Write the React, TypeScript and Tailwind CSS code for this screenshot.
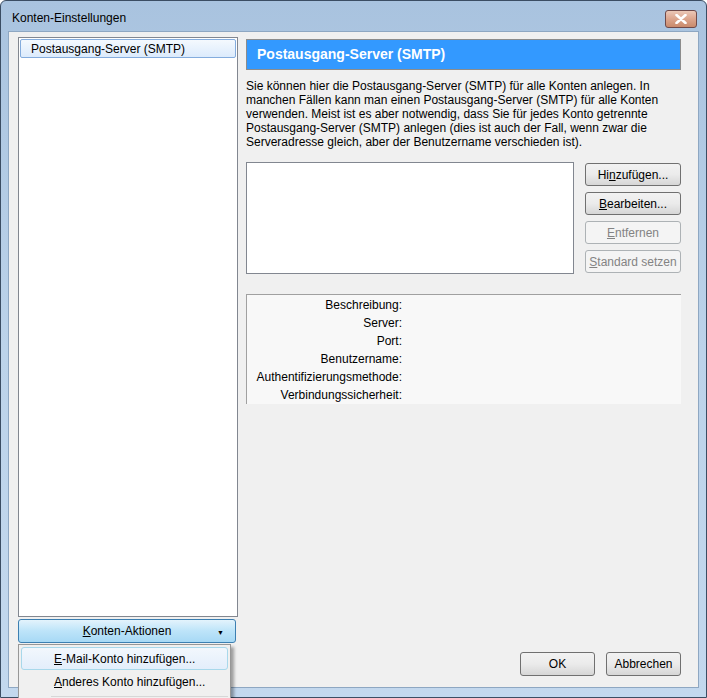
import React from 'react';

const font = { fontFamily: '"Liberation Sans", Arial, sans-serif' };

function Btn({ children, disabled }: { children: React.ReactNode; disabled?: boolean }) {
  return (
    <button
      className={
        disabled
          ? 'h-[23px] w-[96px] rounded-[3px] border border-[#adb2b5] bg-[#f4f4f4] text-[12px] text-[#838383]'
          : 'h-[23px] w-[96px] rounded-[3px] border border-[#707070] bg-gradient-to-b from-[#f2f2f2] via-[#ebebeb] to-[#d6d6d6] text-[12px] text-black'
      }
    >
      {children}
    </button>
  );
}

const labels = [
  'Beschreibung:',
  'Server:',
  'Port:',
  'Benutzername:',
  'Authentifizierungsmethode:',
  'Verbindungssicherheit:',
];

export default function App() {
  return (
    <div className="relative h-[698px] w-[707px] overflow-hidden bg-white" style={font}>
      {/* window frame */}
      <div className="flex h-[698px] w-[707px] flex-col rounded-t-[6px] border border-[#3b4d63] bg-gradient-to-b from-[#a9c3df] via-[#bcd3ea] to-[#c3d8ee] px-[7px] pb-[9px]">
        <div className="flex h-[30px] shrink-0 items-start justify-between pl-[4px] pr-[2px] pt-[9px]">
          <span className="text-[12px] leading-[16px] text-black">Konten-Einstellungen</span>
          <div className="flex h-[18px] w-[32px] items-center justify-center rounded-[3px] border border-[#6f4a4a] bg-gradient-to-b from-[#ebc8b8] via-[#dca58d] to-[#c98a6c]">
            <svg width="12" height="10" viewBox="0 0 12 10">
              <path d="M1.5 1 L10.5 9 M10.5 1 L1.5 9" stroke="#fff" strokeWidth="2.6" strokeLinecap="round" />
            </svg>
          </div>
        </div>

        {/* client area */}
        <div className="flex flex-1 gap-[8px] border border-[#8ea7c2] bg-[#f0f0f0] pl-[9px] pr-[17px] pt-[5px]">
          {/* left column */}
          <div className="flex w-[220px] flex-col">
            <div className="h-[580px] border border-[#828790] bg-white p-[1px]">
              <div className="flex h-[19px] items-center rounded-[2px] border border-[#84acdd] bg-gradient-to-b from-[#f4f9fe] to-[#dcebfc] pl-[10px] text-[12px] text-black">
                Postausgang-Server (SMTP)
              </div>
            </div>
            <div className="relative mt-[2px] flex h-[24px] w-[218px] items-center justify-center rounded-[3px] border border-[#3c7fb1] bg-gradient-to-b from-[#e3f3fc] via-[#bde4f9] to-[#a7d9f5] text-[12px] text-black">
              <span>
                <span className="underline">K</span>onten-Aktionen
              </span>
              <span className="absolute right-[11px] top-[9px] text-[7px] leading-none">▼</span>
            </div>
          </div>

          {/* right column */}
          <div className="flex flex-1 flex-col">
            <div className="mt-[2px] flex h-[31px] items-center border border-[#8c8c8c] bg-[#3399ff] pl-[10px] text-[14px] font-bold text-white">
              Postausgang-Server (SMTP)
            </div>
            <p className="mt-[9px] text-[12px] leading-[14px] text-black">
              Sie können hier die Postausgang-Server (SMTP) für alle Konten anlegen. In manchen Fällen kann man einen
              Postausgang-Server (SMTP) für alle Konten verwenden. Meist ist es aber notwendig, dass Sie für jedes Konto
              getrennte Postausgang-Server (SMTP) anlegen (dies ist auch der Fall, wenn zwar die Serveradresse gleich, aber
              der Benutzername verschieden ist).
            </p>
            <div className="mt-[13px] flex gap-[11px]">
              <div className="h-[112px] w-[328px] border border-[#828790] bg-white" />
              <div className="flex flex-col gap-[6px] pt-[1px]">
                <Btn>
                  Hi<span className="underline">n</span>zufügen...
                </Btn>
                <Btn>
                  <span className="underline">B</span>earbeiten...
                </Btn>
                <Btn disabled>
                  <span className="underline">E</span>ntfernen
                </Btn>
                <Btn disabled>
                  <span className="underline">S</span>tandard setzen
                </Btn>
              </div>
            </div>
            <div className="mt-[20px] flex h-[110px] flex-col border-l border-t border-[#a0a0a0] bg-[#f8f8f8] pt-[1px]">
              {labels.map((l) => (
                <div key={l} className="w-[155px] text-right text-[12px] leading-[18px] text-black">
                  {l}
                </div>
              ))}
            </div>
            <div className="mt-auto mb-[11px] flex justify-end gap-[11px]">
              <button className="h-[24px] w-[75px] rounded-[3px] border border-[#707070] bg-gradient-to-b from-[#f2f2f2] via-[#ebebeb] to-[#d6d6d6] text-[12px]">
                OK
              </button>
              <button className="h-[24px] w-[75px] rounded-[3px] border border-[#707070] bg-gradient-to-b from-[#f2f2f2] via-[#ebebeb] to-[#d6d6d6] text-[12px]">
                Abbrechen
              </button>
            </div>
          </div>
        </div>
      </div>

      {/* popup menu */}
      <div className="absolute left-[18px] top-[644px] h-[60px] w-[213px] border border-[#979797] bg-[#f0f0f0] p-[2px] shadow-[3px_3px_3px_rgba(0,0,0,0.35)]">
        <div className="flex h-[23px] items-center rounded-[3px] border border-[#a8d8eb] bg-gradient-to-b from-[#f2f7fd] to-[#e3eefb] pl-[32px] text-[12px] text-black">
          <span>
            <span className="underline">E</span>-Mail-Konto hinzufügen...
          </span>
        </div>
        <div className="flex h-[23px] items-center pl-[33px] text-[12px] text-black">
          <span>
            <span className="underline">A</span>nderes Konto hinzufügen...
          </span>
        </div>
        <div className="ml-[30px] mt-[3px] h-px bg-[#d7d7d7]" />
      </div>
    </div>
  );
}
